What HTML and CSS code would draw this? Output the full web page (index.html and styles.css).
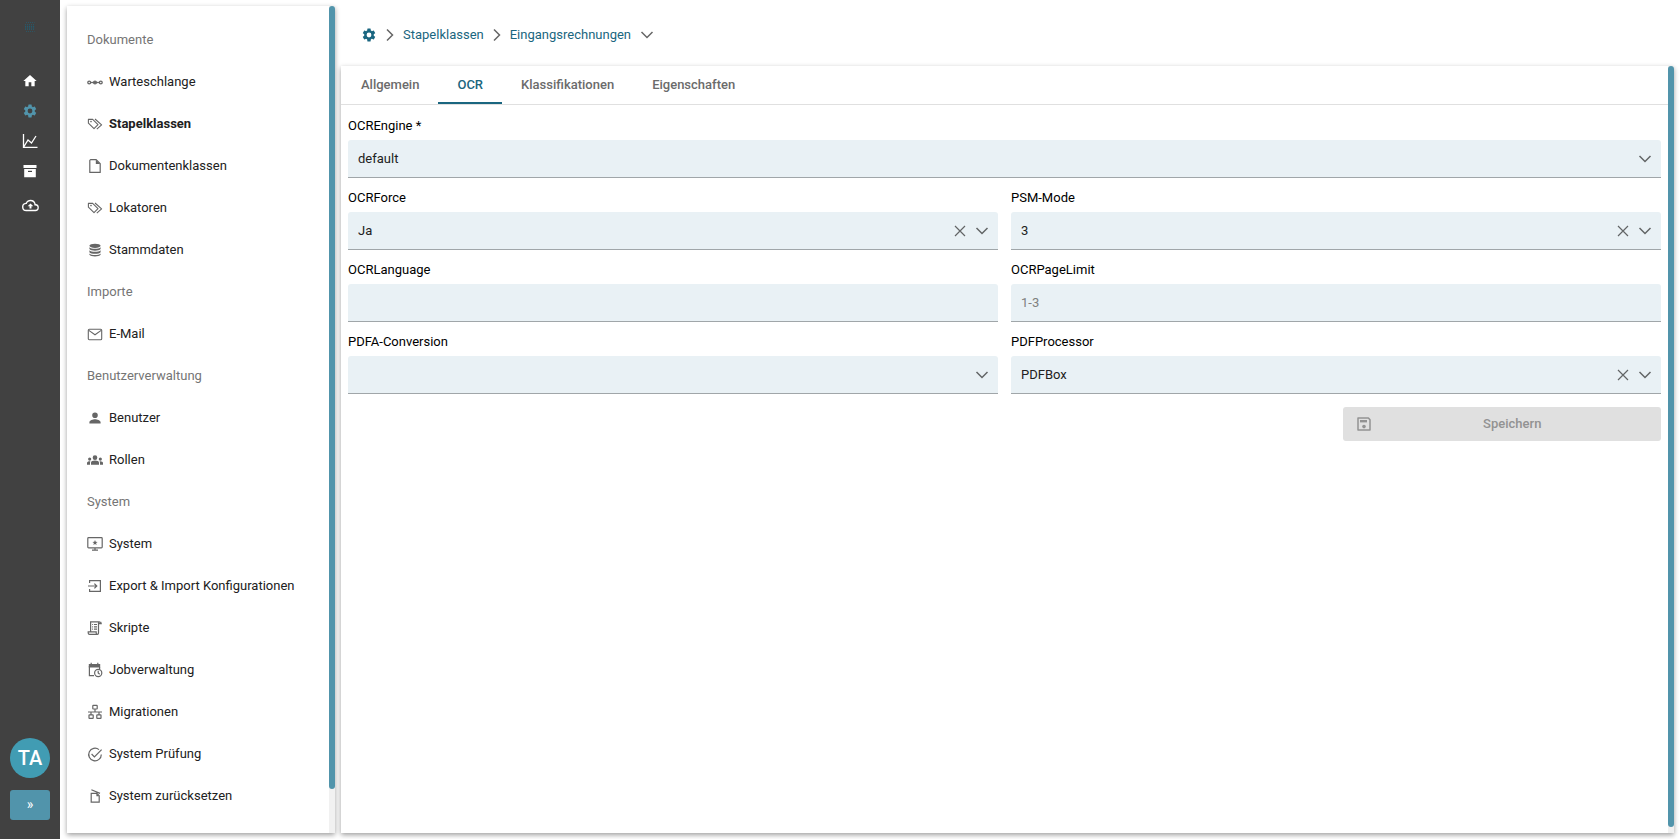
FILE: index.html
```html
<!DOCTYPE html>
<html lang="de">
<head>
<meta charset="utf-8">
<title>Eingangsrechnungen</title>
<link rel="stylesheet" href="styles.css">
</head>
<body>
<svg class="sprite" aria-hidden="true">
  <symbol id="gear" viewBox="0 0 24 24"><path fill="currentColor" d="M19.14 12.94c.04-.3.06-.61.06-.94s-.02-.64-.07-.94l2.03-1.58a.49.49 0 0 0 .12-.61l-1.92-3.32a.49.49 0 0 0-.59-.22l-2.39.96a7 7 0 0 0-1.62-.94l-.36-2.54a.48.48 0 0 0-.48-.41h-3.84a.47.47 0 0 0-.47.41l-.36 2.54c-.59.24-1.13.57-1.62.94l-2.39-.96a.48.48 0 0 0-.59.22L2.74 8.87a.47.47 0 0 0 .12.61l2.03 1.58a6 6 0 0 0-.02 1.88l-2.03 1.58a.49.49 0 0 0-.12.61l1.92 3.32c.12.22.37.29.59.22l2.39-.96c.5.38 1.03.7 1.62.94l.36 2.54c.05.24.24.41.48.41h3.84c.24 0 .44-.17.47-.41l.36-2.54a7 7 0 0 0 1.62-.94l2.39.96c.22.08.47 0 .59-.22l1.92-3.32a.47.47 0 0 0-.12-.61zM12 15.6a3.6 3.6 0 1 1 0-7.2 3.6 3.6 0 0 1 0 7.2"/></symbol>
  <symbol id="tags" viewBox="0 0 16 16"><g fill="none" stroke="currentColor" stroke-width="1.1" stroke-linejoin="round"><path d="M1.4 3.4v3.8l5.6 5.4 4-4-5.6-5.4z"/><path d="M8 3l6.6 5.8-4.8 4.4"/></g><circle cx="4" cy="5.6" r=".8" fill="currentColor"/></symbol>
  <symbol id="down" viewBox="0 0 16 16"><path fill="none" stroke="currentColor" stroke-width="1.5" d="M2.5 5L8 10.5 13.5 5"/></symbol>
  <symbol id="cross" viewBox="0 0 16 16"><path fill="none" stroke="currentColor" stroke-width="1.2" d="M3 3l10 10M13 3L3 13"/></symbol>
  <symbol id="right" viewBox="0 0 16 16"><path fill="none" stroke="currentColor" stroke-width="1.5" d="M5 2.5L10.5 8 5 13.5"/></symbol>
</svg>
<div class="app">
  <aside class="rail">
    <nav class="rail-nav" aria-label="Hauptmenü">
      <a class="rail-link logo" href="#" aria-label="Start"><svg viewBox="0 0 24 24"><path fill="none" stroke="currentColor" stroke-width="1.6" stroke-dasharray="1.6 2.4" d="M4 3h17M2 7h20M2 17h20M4 21h17"/><path fill="none" stroke="currentColor" stroke-width="2.4" stroke-dasharray="2.4 1.6" d="M2 10.5h20M2 14h20"/></svg></a>
      <a class="rail-link" href="#" aria-label="Home"><svg viewBox="0 0 24 24"><path fill="currentColor" d="M10 20v-6h4v6h5v-8h3L12 3 2 12h3v8z"/></svg></a>
      <a class="rail-link active" href="#" aria-label="Einstellungen"><svg><use href="#gear"/></svg></a>
      <a class="rail-link" href="#" aria-label="Statistik"><svg viewBox="0 0 16 16"><path fill="none" stroke="currentColor" stroke-width="1.3" d="M1.5 1v13.3H15.5M2 13.5L6 7l3.5 3L14 3"/></svg></a>
      <a class="rail-link" href="#" aria-label="Archiv"><svg viewBox="0 0 16 16"><path fill="currentColor" d="M1.5 2h13v3h-13zM2.2 6h11.6v8.2H2.2z"/><path stroke="#414141" stroke-width="1.2" d="M6 8.4h4"/></svg></a>
      <a class="rail-link upload" href="#" aria-label="Upload"><svg viewBox="0 0 24 24"><path fill="currentColor" d="M19.35 10.04A7.49 7.49 0 0 0 12 4C9.11 4 6.6 5.64 5.35 8.04A6 6 0 0 0 6 20h13a5 5 0 0 0 .35-9.96M19 18H6a4 4 0 0 1 0-8h.71a5.5 5.5 0 0 1 10.79 1.5v.5H19a3 3 0 0 1 0 6M8 13h2.6v3.4h2.8V13H16l-4-4z"/></svg></a>
    </nav>
    <div class="rail-foot">
      <button class="avatar" type="button">TA</button>
      <button class="expand" type="button" aria-label="Menü ausklappen">»</button>
    </div>
  </aside>

  <div class="card side">
    <nav class="side-nav" aria-label="Einstellungen">
      <h2 class="group">Dokumente</h2>
      <a class="item" href="#"><svg viewBox="0 0 16 16"><g fill="none" stroke="currentColor" stroke-width="1.3"><circle cx="2.2" cy="8.5" r="1.4"/><circle cx="8" cy="8.5" r="1.4"/><circle cx="13.8" cy="8.5" r="1.4"/><path d="M3.5 8.5h9"/></g></svg>Warteschlange</a>
      <a class="item current" href="#"><svg><use href="#tags"/></svg>Stapelklassen</a>
      <a class="item" href="#"><svg viewBox="0 0 16 16"><path fill="none" stroke="currentColor" stroke-width="1.2" stroke-linejoin="round" d="M3.6 1.6h5.6l4 4v8.8H2.8V2.4z"/><path fill="currentColor" d="M8.8 1.6v4.4h4.4z"/></svg>Dokumentenklassen</a>
      <a class="item" href="#"><svg><use href="#tags"/></svg>Lokatoren</a>
      <a class="item" href="#"><svg viewBox="0 0 16 16"><g fill="currentColor"><ellipse cx="8" cy="3.8" rx="5.6" ry="2.1"/><path d="M2.4 5.2c1.6 2 9.6 2 11.2 0v1.9c-1.4 2.2-9.8 2.2-11.2 0zM2.4 8.3c1.6 2 9.6 2 11.2 0v1.9c-1.4 2.2-9.8 2.2-11.2 0zM2.4 11.4c1.6 2 9.6 2 11.2 0v1.4c-1.4 2.2-9.8 2.2-11.2 0z"/></g></svg>Stammdaten</a>
      <h2 class="group">Importe</h2>
      <a class="item" href="#"><svg viewBox="0 0 16 16"><g fill="none" stroke="currentColor" stroke-width="1.1"><rect x="1.3" y="3.3" width="13.4" height="10.4" rx="1"/><path d="M1.8 4.4L8 8.8l6.2-4.4"/></g></svg>E-Mail</a>
      <h2 class="group">Benutzerverwaltung</h2>
      <a class="item" href="#"><svg viewBox="0 0 16 16"><path fill="currentColor" d="M8 8a2.8 2.8 0 1 0 0-5.6A2.8 2.8 0 0 0 8 8m0 1.2c-2 0-5.6 1-5.6 3v1.4h11.2v-1.4c0-2-3.6-3-5.6-3"/></svg>Benutzer</a>
      <a class="item" href="#"><svg viewBox="0 0 24 24"><path fill="currentColor" d="M12 12.75c1.63 0 3.07.39 4.24.9 1.08.48 1.76 1.56 1.76 2.73V19H6v-2.61c0-1.18.68-2.26 1.76-2.73 1.17-.52 2.61-.91 4.24-.91M4 13a2.4 2.4 0 1 0 0-4.8A2.4 2.4 0 0 0 4 13m1.13 1.1A7 7 0 0 0 4 14c-.99 0-1.93.21-2.78.58A2.01 2.01 0 0 0 0 16.43V19h4.5v-2.61c0-.83.23-1.61.63-2.29M20 13a2.4 2.4 0 1 0 0-4.8 2.4 2.4 0 0 0 0 4.8m4 3.43c0-.81-.48-1.53-1.22-1.85A7 7 0 0 0 18.87 14.1c.4.68.63 1.46.63 2.29V19H24zM12 5a3.5 3.5 0 1 1 0 7 3.5 3.5 0 0 1 0-7"/></svg>Rollen</a>
      <h2 class="group">System</h2>
      <a class="item" href="#"><svg viewBox="0 0 16 16"><g fill="none" stroke="currentColor" stroke-width="1.2"><rect x=".8" y="1.6" width="14.4" height="10.2" rx=".8"/><path d="M5 14.2h6M8 12v2"/></g><path fill="currentColor" d="M8 4l.7 1.8 1.9.1-1.5 1.2.5 1.9L8 8l-1.6 1 .5-1.9-1.5-1.2 1.9-.1z"/></svg>System</a>
      <a class="item" href="#"><svg viewBox="0 0 16 16"><g fill="none" stroke="currentColor" stroke-width="1.2"><path d="M2.6 5V2.7h10.8v10.6H2.6V11M1 8h8.6M7.4 5.6L9.8 8l-2.4 2.4"/></g></svg>Export &amp; Import Konfigurationen</a>
      <a class="item" href="#"><svg viewBox="0 0 16 16"><g fill="none" stroke="currentColor" stroke-width="1.2"><path d="M3.6 11.6V1.8h9.2c-1 0-1.3.5-1.3 1.4V13c0 .9-.4 1.3-1.2 1.3M12.5 1.8c1.2 0 1.7.6 1.7 1.8h-2.6M1.2 11.8h8v1.2c0 .8.4 1.3 1.2 1.3H2.6c-1 0-1.4-.6-1.4-1.4z"/><path d="M5.2 4.5h.9M7 4.5h3M5.2 6.8h.9M7 6.8h3M5.2 9.1h.9M7 9.1h3"/></g></svg>Skripte</a>
      <a class="item" href="#"><svg viewBox="0 0 16 16"><path fill="currentColor" d="M1.8 2h11.4v3.6H1.8zM3.6.8h1.2V3H3.6zM10.2.8h1.2V3h-1.2z"/><g fill="none" stroke="currentColor" stroke-width="1.2"><path d="M7 13.7H2.4V4M12.6 5v2"/><circle cx="11.2" cy="11" r="3.6"/><path d="M11.2 8.8V11l1.5 1.2"/></g></svg>Jobverwaltung</a>
      <a class="item" href="#"><svg viewBox="0 0 16 16"><g fill="none" stroke="currentColor" stroke-width="1.2"><rect x="5.8" y="1.4" width="4.4" height="3.6" rx=".5"/><rect x="2" y="10.8" width="4.2" height="3.6" rx=".5"/><rect x="9.8" y="10.8" width="4.2" height="3.6" rx=".5"/><path d="M8 5v3M1 8h14M4 8v3M12 8v3"/></g></svg>Migrationen</a>
      <a class="item" href="#"><svg viewBox="0 0 16 16"><g fill="none" stroke="currentColor" stroke-width="1.2"><path d="M12 3.6A6.3 6.3 0 1 0 14.3 8.4M4.6 8l2.8 2.8 7.2-7.2"/></g></svg>System Prüfung</a>
      <a class="item" href="#"><svg viewBox="0 0 16 16"><g fill="none" stroke="currentColor" stroke-width="1.2"><path d="M4.2 5.4h5.6l2.4 2.4v6.4H4.2zM4.4 1.8l8.6 3.6"/></g><path fill="currentColor" d="M9.4 5.4v2.8h2.8z"/></svg>System zurücksetzen</a>
    </nav>
    <div class="track" aria-hidden="true"><div class="thumb side-thumb"></div></div>
  </div>

  <main class="main">
    <nav class="crumbs" aria-label="Brotkrumen">
      <a class="crumb-home" href="#" aria-label="Einstellungen"><svg><use href="#gear"/></svg></a>
      <svg class="sep"><use href="#right"/></svg>
      <a href="#">Stapelklassen</a>
      <svg class="sep"><use href="#right"/></svg>
      <a href="#">Eingangsrechnungen</a>
      <button class="icon-btn" type="button" aria-label="Auswahl öffnen"><svg><use href="#down"/></svg></button>
    </nav>
    <section class="card content">
      <div class="pane">
        <div class="tabs" role="tablist">
          <button class="tab" role="tab" type="button">Allgemein</button>
          <button class="tab selected" role="tab" type="button" aria-selected="true">OCR</button>
          <button class="tab" role="tab" type="button">Klassifikationen</button>
          <button class="tab" role="tab" type="button">Eigenschaften</button>
        </div>
        <form class="form">
          <div class="field wide">
            <label for="engine">OCREngine *</label>
            <div class="control"><select id="engine"><option>default</option></select><svg><use href="#down"/></svg></div>
          </div>
          <div class="field">
            <label for="force">OCRForce</label>
            <div class="control"><select id="force"><option>Ja</option></select><button class="icon-btn" type="button" aria-label="Leeren"><svg><use href="#cross"/></svg></button><svg><use href="#down"/></svg></div>
          </div>
          <div class="field">
            <label for="psm">PSM-Mode</label>
            <div class="control"><select id="psm"><option>3</option></select><button class="icon-btn" type="button" aria-label="Leeren"><svg><use href="#cross"/></svg></button><svg><use href="#down"/></svg></div>
          </div>
          <div class="field">
            <label for="lang">OCRLanguage</label>
            <div class="control"><input id="lang" type="text"></div>
          </div>
          <div class="field">
            <label for="limit">OCRPageLimit</label>
            <div class="control"><input id="limit" type="text" placeholder="1-3"></div>
          </div>
          <div class="field">
            <label for="pdfa">PDFA-Conversion</label>
            <div class="control"><select id="pdfa"><option></option></select><svg><use href="#down"/></svg></div>
          </div>
          <div class="field">
            <label for="proc">PDFProcessor</label>
            <div class="control"><select id="proc"><option>PDFBox</option></select><button class="icon-btn" type="button" aria-label="Leeren"><svg><use href="#cross"/></svg></button><svg><use href="#down"/></svg></div>
          </div>
          <button class="save" type="submit" disabled>
            <svg viewBox="0 0 16 16"><path fill="none" stroke="currentColor" stroke-width="1.5" stroke-linejoin="round" d="M2 2h10.4L14 3.8V14H2z"/><path fill="currentColor" d="M4 4h7v2.4H4z"/><circle cx="8" cy="10.6" r="1.8" fill="currentColor"/></svg>
            <span>Speichern</span>
          </button>
        </form>
      </div>
      <div class="track" aria-hidden="true"><div class="thumb content-thumb"></div></div>
    </section>
  </main>
</div>
</body>
</html>
```
FILE: styles.css
```css
* { box-sizing: border-box; }

body {
  margin: 0;
  font-family: Roboto, "Liberation Sans", sans-serif;
  font-size: 13px;
  line-height: 20px;
  color: #212121;
  background: #fff;
}

a { color: inherit; text-decoration: none; }

button, input, select { font: inherit; color: inherit; }

svg { display: block; flex: none; width: 16px; height: 16px; }

.sprite { position: absolute; width: 0; height: 0; }

.app { display: flex; height: 100vh; overflow: hidden; }

/* icon rail */
.rail {
  display: flex;
  flex-direction: column;
  justify-content: space-between;
  flex: none;
  width: 60px;
  padding: 12px 10px 19px;
  background: #414141;
  color: #fff;
}

.rail-nav { display: flex; flex-direction: column; align-items: center; }
.rail-link { display: grid; place-items: center; width: 40px; height: 30px; }
.rail-link.logo { color: #1f627a; margin-bottom: 24px; }
.rail-link.logo svg { width: 12px; height: 12px; }
.rail-link.active { color: #5194ab; }
.rail-link.upload { height: 38px; }
.rail-link.upload svg { width: 17px; height: 17px; }

.rail-foot { display: flex; flex-direction: column; gap: 12px; }
.avatar {
  height: 40px;
  padding: 0;
  border: 0;
  border-radius: 50%;
  background: #419cb3;
  font-size: 20px;
  font-weight: 500;
}
.expand {
  height: 30px;
  padding: 0 0 3px;
  border: 0;
  border-radius: 3px;
  background: #5194ab;
  font-size: 14px;
}

/* raised panels */
.card {
  display: flex;
  overflow: hidden;
  background: #fff;
  box-shadow: 0 2px 5px rgba(0, 0, 0, .38);
}
.track { flex: none; width: 6px; background: #f1f1f1; }
.thumb { border-radius: 3px; background: #5194ab; }
.side-thumb { height: calc(100% - 44px); }
.content-thumb { height: calc(100% - 6px); }

/* settings menu */
.side { flex: none; width: 268px; margin: 6px 5px 6px 7px; }
.side-nav { flex: 1; padding: 13px 20px; overflow: hidden; }
.group {
  margin: 0;
  font-size: 13px;
  font-weight: 400;
  line-height: 42px;
  color: #757575;
}
.item { display: flex; align-items: center; gap: 6px; height: 42px; white-space: nowrap; }
.item svg { color: #666; }
.item.current { font-weight: 700; }

/* work area */
.main { display: flex; flex: 1; flex-direction: column; min-width: 0; padding: 0 6px 6px 1px; }
.crumbs {
  display: flex;
  align-items: center;
  gap: 5px;
  flex: none;
  height: 66px;
  padding: 3px 20px 0;
  color: #1a6680;
}
.crumbs .sep, .crumbs .icon-btn { color: #666; }
.crumbs .icon-btn { margin-left: 3px; }
.icon-btn { padding: 0; border: 0; background: none; cursor: pointer; }

.content { flex: 1; min-height: 0; }
.pane { flex: 1; min-width: 0; }

.tabs { display: flex; height: 39px; padding-left: 1px; border-bottom: 1px solid #e0e0e0; }
.tab {
  padding: 2px 19px 0;
  border: 0;
  border-bottom: 2px solid transparent;
  background: none;
  color: #6b6b6b;
  font-weight: 500;
}
.tab.selected { border-color: #1a6680; color: #1a6680; }

.form {
  display: grid;
  grid-template-columns: 1fr 1fr;
  gap: 10px 13px;
  padding: 11px 7px;
}
.wide { grid-column: 1 / -1; }
.field label { display: block; margin-bottom: 4px; color: #000; }
.control {
  display: flex;
  align-items: center;
  gap: 6px;
  height: 38px;
  padding-right: 8px;
  border-bottom: 1px solid #a0a6a9;
  border-radius: 3px 3px 0 0;
  background: #e9f1f5;
}
.control svg { color: #626566; }
.control select, .control input {
  flex: 1;
  min-width: 0;
  height: 100%;
  padding: 0 10px;
  border: 0;
  outline: 0;
  background: none;
  appearance: none;
}
.control input::placeholder { color: #808080; opacity: 1; }

.save {
  display: flex;
  align-items: center;
  justify-self: end;
  grid-column: 2;
  width: 49%;
  height: 34px;
  margin-top: 3px;
  padding: 0 8px 0 13px;
  border: 0;
  border-radius: 3px;
  background: #e0e0e0;
  color: #929292;
  font-weight: 500;
}
.save span { flex: 1; }
```
